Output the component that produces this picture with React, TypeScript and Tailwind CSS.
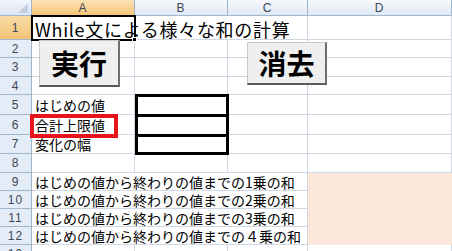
import React from "react";

const grid = "border-r border-b border-[#d0d7e5]";
const head = "flex shrink-0 items-center justify-center border-r border-b border-[#9eb6ce] font-['Liberation_Sans',sans-serif] text-[12px] tracking-[1px] text-[#3c4858]";

function RowHead({ n, active }: { n: number; active?: boolean }) {
	return (
		<div
			className={`${head} w-[32px] ${active ? "bg-gradient-to-b from-[#f9dca6] to-[#f2c274]" : "bg-[#e4ecf7]"}`}
		>
			{n}
		</div>
	);
}

function Empty({ n, h }: { n: number; h: string }) {
	return (
		<div className={`flex ${h}`}>
			<RowHead n={n} />
			<div className={`w-[103px] ${grid}`} />
			<div className={`w-[93px] ${grid}`} />
			<div className={`w-[80px] ${grid}`} />
			<div className={`flex-1 ${grid}`} />
		</div>
	);
}

function Label({ n, h, text }: { n: number; h: string; text: string }) {
	return (
		<div className={`flex ${h}`}>
			<RowHead n={n} />
			<div className={`flex w-[103px] items-center pl-[3px] text-[14px] leading-none ${grid}`}>
				{text}
			</div>
			<div className={`w-[93px] ${grid}`} />
			<div className={`w-[80px] ${grid}`} />
			<div className={`flex-1 ${grid}`} />
		</div>
	);
}

function SumRow({ n, power }: { n: number; power: string }) {
	return (
		<div className="flex h-[18px]">
			<RowHead n={n} />
			<div className={`flex w-[276px] items-center whitespace-nowrap pl-[3px] text-[14px] leading-none ${grid}`}>
				はじめの値から終わりの値までの{power}乗の和
			</div>
			<div className="flex-1 bg-[#fce8da]" />
		</div>
	);
}

export default function App() {
	return (
		<div className="relative h-[251px] w-[452px] overflow-hidden bg-white font-['Noto_Sans_CJK_JP',sans-serif] text-black">
			{/* column headers */}
			<div className="flex h-[16px]">
				<div className="relative w-[32px] shrink-0 border-r border-b border-[#9eb6ce] bg-gradient-to-b from-[#f3f6fb] to-[#dfe7f2]">
					<div className="absolute right-[3px] bottom-[2px] h-0 w-0 border-b-[10px] border-l-[10px] border-b-[#c4d1e2] border-l-transparent" />
				</div>
				<div className={`${head} w-[103px] border-b-[#f0b860] bg-gradient-to-b from-[#fbe2b4] to-[#f6c777]`}>A</div>
				<div className={`${head} w-[93px] bg-gradient-to-b from-[#f6f9fd] to-[#e1e9f4]`}>B</div>
				<div className={`${head} w-[80px] bg-gradient-to-b from-[#f6f9fd] to-[#e1e9f4]`}>C</div>
				<div className={`${head} flex-1 bg-gradient-to-b from-[#f6f9fd] to-[#e1e9f4]`}>D</div>
			</div>

			{/* row 1 */}
			<div className="flex h-[24px]">
				<RowHead n={1} active />
				<div className={`flex w-[276px] items-end whitespace-nowrap pb-[1px] pl-[3px] text-[18px] leading-none tracking-[0.7px] ${grid}`}>
					While文による様々な和の計算
				</div>
				<div className={`flex-1 ${grid}`} />
			</div>
			<Empty n={2} h="h-[18px]" />
			<Empty n={3} h="h-[19px]" />
			<Empty n={4} h="h-[18px]" />
			<Label n={5} h="h-[20px]" text="はじめの値" />
			<Label n={6} h="h-[20px]" text="合計上限値" />
			<Label n={7} h="h-[19px]" text="変化の幅" />
			<Empty n={8} h="h-[19px]" />
			<SumRow n={9} power="1" />
			<SumRow n={10} power="2" />
			<SumRow n={11} power="3" />
			<SumRow n={12} power="４" />
			<Empty n={13} h="h-[18px]" />

			{/* active cell A1 */}
			<div className="absolute top-[15px] left-[31px] h-[26px] w-[105px] border-2 border-black" />
			<div className="absolute top-[37px] left-[132px] h-[5px] w-[5px] border border-white bg-black" />

			{/* thick border B5:B7 */}
			<div className="absolute top-[94px] left-[135px] flex h-[61px] w-[94px] flex-col border-[3px] border-black">
				<div className="h-[17px]" />
				<div className="h-[3px] bg-black" />
				<div className="h-[17px]" />
				<div className="h-[3px] bg-black" />
			</div>

			{/* red rectangle shape */}
			<div className="absolute top-[114px] left-[30px] h-[24px] w-[88px] border-4 border-[#e8141b]" />

			{/* form buttons */}
			<button
				type="button"
				className="absolute top-[40px] left-[39px] flex h-[47px] w-[81px] items-center justify-center border border-r-2 border-b-2 border-[#c9c9c9] border-r-[#6e6e6e] border-b-[#5a5a5a] bg-[#efefef] text-[28px] leading-none font-bold"
			>
				実行
			</button>
			<button
				type="button"
				className="absolute top-[42px] left-[247px] flex h-[43px] w-[80px] items-center justify-center border border-r-2 border-b-2 border-[#c9c9c9] border-r-[#6e6e6e] border-b-[#5a5a5a] bg-[#efefef] text-[28px] leading-none font-bold"
			>
				消去
			</button>
		</div>
	);
}
